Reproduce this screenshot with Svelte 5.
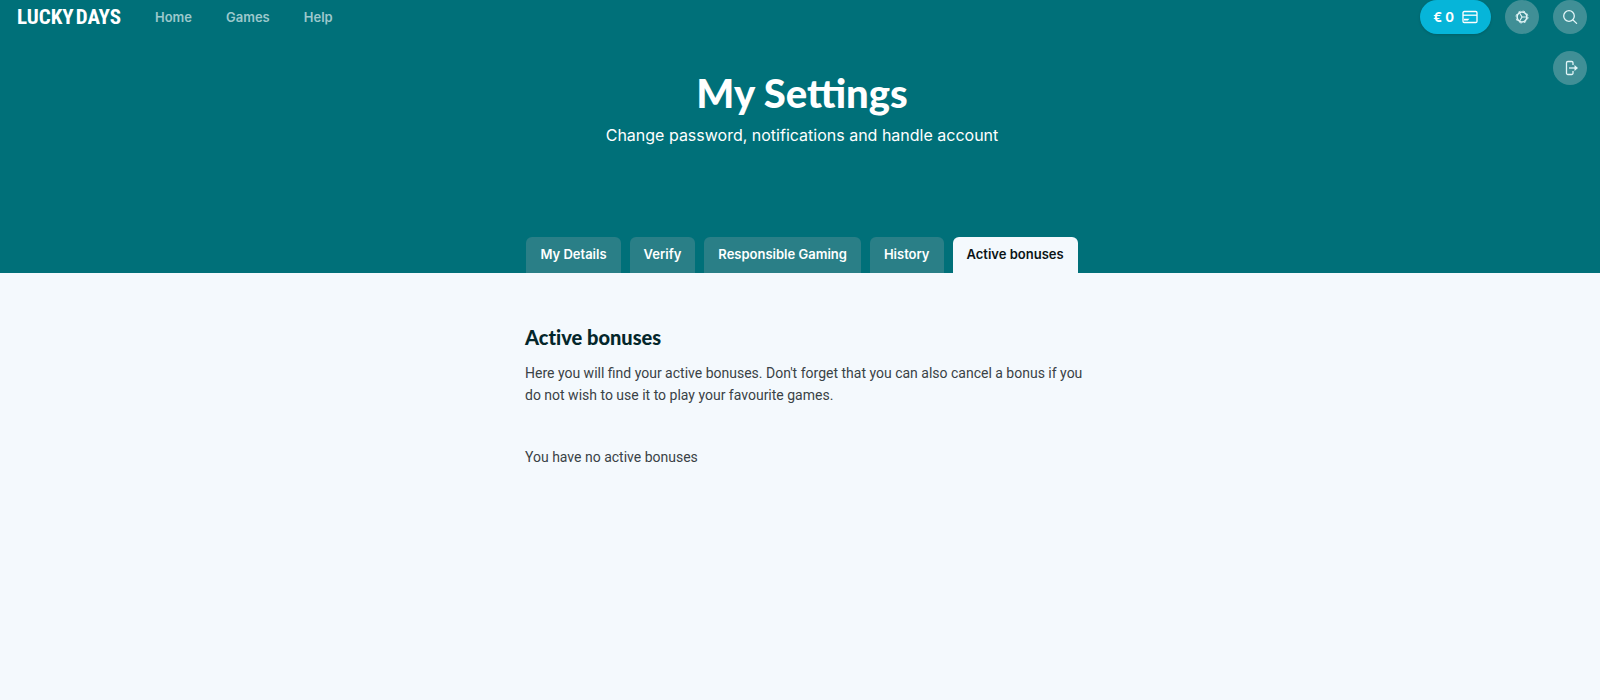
<script lang="ts">
  const links = ['Home', 'Games', 'Help'];
  const tabs = ['My Details', 'Verify', 'Responsible Gaming', 'History', 'Active bonuses'];

  let active = $state('Active bonuses');
</script>

<div class="page">
  <header class="hero">
    <div class="topbar">
      <a class="logo" href="#home" aria-label="Lucky Days"><span>LUCKY</span><span>DAYS</span></a>
      <nav class="links">
        {#each links as link}
          <a href="#{link.toLowerCase()}">{link}</a>
        {/each}
      </nav>
      <div class="actions">
        <button class="balance">
          <span>€ 0</span>
          <svg viewBox="0 0 16 14" width="16" height="14" fill="none" stroke="currentColor" stroke-width="1.3" stroke-linejoin="round" aria-hidden="true">
            <rect x="1" y="1.5" width="14" height="11" rx="1.2"/>
            <path d="M1 5.2h14"/>
            <path d="M2 10.5V8.8h5.5l-1.7 1.7z" fill="currentColor" stroke="none"/>
          </svg>
        </button>
        <button class="round" aria-label="Settings">
          <svg viewBox="0 0 16 16" width="16" height="16" fill="none" stroke="currentColor" aria-hidden="true">
            <circle cx="8" cy="8" r="4.9" stroke-width="1.5"/>
            <circle cx="8" cy="8" r="6" stroke-width="0.9" stroke-dasharray="2.356 2.356"/>
            <path d="M8 8h5M8 8L5.5 3.700M8 8l-2.500 4.300" stroke-width="1.2"/>
          </svg>
        </button>
        <button class="round" aria-label="Search">
          <svg viewBox="0 0 16 16" width="16" height="16" fill="none" stroke="currentColor" stroke-width="1.3" stroke-linecap="round" aria-hidden="true">
            <circle cx="7" cy="7" r="5.3"/>
            <path d="M11 11l3.6 3.4"/>
          </svg>
        </button>
        <button class="round logout" aria-label="Log out">
          <svg viewBox="0 0 16 16" width="16" height="16" fill="none" stroke="currentColor" stroke-width="1.3" stroke-linejoin="round" aria-hidden="true">
            <path d="M11 5V2.8A1.3 1.3 0 0 0 9.7 1.500H5.800A1.300 1.300 0 0 0 4.500 2.800V13.200A1.300 1.300 0 0 0 5.800 14.500H9.700A1.300 1.300 0 0 0 11 13.200V11"/>
            <path d="M7 8h7"/>
            <path d="M12.500 5l3.500 3-3.500 3z" fill="currentColor" stroke="none"/>
          </svg>
        </button>
      </div>
    </div>

    <div class="intro">
      <h1>My Settings</h1>
      <p>Change password, notifications and handle account</p>
    </div>

    <nav class="tabs" aria-label="Settings sections">
      {#each tabs as tab}
        <button class:active={active === tab} onclick={() => (active = tab)}>{tab}</button>
      {/each}
    </nav>
  </header>

  <main>
    <h2>Active bonuses</h2>
    <p>
      Here you will find your active bonuses. Don't forget that you can also cancel a bonus if you
      do not wish to use it to play your favourite games.
    </p>
    <p class="empty">You have no active bonuses</p>
  </main>
</div>

<style>
  :global(body) {
    background: #f4f9fd;
  }
  .page {
    min-height: 100vh;
    font-family: Inter, 'Liberation Sans', sans-serif;
    font-size: 13px;
    color: #3a4246;
    background: #f4f9fd;
  }
  .hero {
    background: #007079;
    color: #fff;
  }
  .topbar {
    display: flex;
    align-items: center;
    height: 34px;
    padding: 0 13px 0 17px;
  }
  .logo {
    display: flex;
    gap: 2px;
    font-family: 'Roboto Condensed', Roboto, sans-serif;
    font-size: 21px;
    font-weight: 700;
    color: #fff;
    text-decoration: none;
  }
  .links {
    display: flex;
    gap: 34px;
    margin-left: 34px;
  }
  .links a {
    font-weight: 600;
    color: #9cc8cc;
    text-decoration: none;
  }
  .actions {
    position: relative;
    display: flex;
    gap: 14px;
    margin-left: auto;
  }
  button {
    border: 0;
    padding: 0;
    font: inherit;
    color: inherit;
    cursor: pointer;
  }
  .balance {
    display: flex;
    align-items: center;
    gap: 8px;
    height: 34px;
    padding: 0 13px;
    border-radius: 17px;
    background: #06b5d9;
    font-weight: 700;
    box-shadow: 0 1px 3px rgba(0, 0, 0, 0.15);
  }
  .round {
    display: flex;
    align-items: center;
    justify-content: center;
    width: 34px;
    height: 34px;
    border-radius: 50%;
    background: #408f96;
    color: #e2f5f7;
  }
  .logout {
    position: absolute;
    top: 51px;
    right: 0;
  }
  .intro {
    padding: 35px 0 0 4px;
    text-align: center;
  }
  h1 {
    margin: 0;
    font-family: Lato, sans-serif;
    font-size: 40px;
    font-weight: 900;
    line-height: 48px;
  }
  .intro p {
    margin: 6px 0 0;
    font-size: 16px;
    line-height: 24px;
  }
  .tabs {
    display: flex;
    justify-content: center;
    gap: 9px;
    padding: 90px 0 0 4px;
  }
  .tabs button {
    height: 36px;
    padding: 0 14px 2px;
    border-radius: 6px 6px 0 0;
    background: #2a7f87;
    font-weight: 600;
  }
  .tabs button.active {
    background: #f4f9fd;
    color: #0b1417;
  }
  main {
    max-width: 562px;
    margin: 0 auto;
    padding: 51px 0 0 12px;
  }
  h2 {
    margin: 0;
    font-family: Lato, sans-serif;
    font-size: 20px;
    font-weight: 900;
    font-variant-ligatures: none;
    line-height: 26px;
    color: #04272b;
  }
  main p {
    margin: 12px 0 0;
    font-family: Roboto, sans-serif;
    font-size: 14px;
    line-height: 22px;
  }
  main .empty {
    margin-top: 40px;
  }
</style>
